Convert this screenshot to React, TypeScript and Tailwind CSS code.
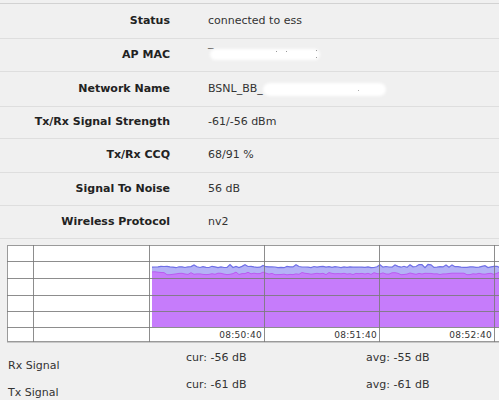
import React from "react";

const rows: { label: string; value: React.ReactNode; h: number }[] = [
  { label: "Status", value: "connected to ess", h: 34 },
  {
    label: "AP MAC",
    value: (
      <span className="relative inline-block w-[115px] h-[14px] align-middle">
        <span className="absolute left-[0px] top-[-3px] text-[#555]">‾</span>
        <span className="absolute left-[2px] top-[1px] w-[110px] h-[11px] rounded-full bg-white blur-[1.5px]" />
        <span className="absolute left-[68px] top-[3px] w-[1px] h-[1px] bg-[#999]" />
        <span className="absolute left-[78px] top-[3px] w-[1px] h-[1px] bg-[#999]" />
        <span className="absolute left-[108px] top-[2px] w-[1px] h-[1px] bg-[#999]" />
        <span className="absolute left-[108px] top-[9px] w-[1px] h-[1px] bg-[#999]" />
      </span>
    ),
    h: 32,
  },
  {
    label: "Network Name",
    value: (
      <span className="inline-flex items-center">
        <span>BSNL_BB_</span>
        <span className="relative inline-block w-[125px] h-[14px]">
          <span className="absolute left-[0px] top-[1px] w-[123px] h-[13px] rounded-full bg-white blur-[1.5px]" />
          <span className="absolute left-[95px] top-[8px] w-[1px] h-[1px] bg-[#aaa]" />
        </span>
      </span>
    ),
    h: 34,
  },
  { label: "Tx/Rx Signal Strength", value: "-61/-56 dBm", h: 31 },
  { label: "Tx/Rx CCQ", value: "68/91 %", h: 33 },
  { label: "Signal To Noise", value: "56 dB", h: 32 },
  { label: "Wireless Protocol", value: "nv2", h: 32 },
];

function rand(seed: number) {
  let s = seed;
  return () => {
    s = (s * 9301 + 49297) % 233280;
    return s / 233280;
  };
}

function Chart() {
  const W = 500;
  const startX = 145;
  const r = rand(7);
  const blue: [number, number][] = [];
  const purple: [number, number][] = [];
  for (let x = startX; x <= W; x += 3) {
    const bump = r() < 0.12 ? -2 : 0;
    blue.push([x, 22 + (r() - 0.5) * 1.4 + bump]);
    const pb = x < 160 ? 27.5 : 29;
    purple.push([x, pb + (r() - 0.5) * 1.6 + (r() < 0.1 ? -1.2 : 0)]);
  }
  const line = (pts: [number, number][]) =>
    pts.map((p, i) => `${i === 0 ? "M" : "L"}${p[0]},${p[1].toFixed(1)}`).join(" ");
  const blueArea = `${line(blue)} L${W},82 L${startX},82 Z`;
  const purpleArea = `${line(purple)} L${W},82 L${startX},82 Z`;
  const hLines = [16, 33, 50, 66, 82];
  const vLines = [26, 142, 257, 372, 487];
  return (
    <svg width={W} height={98} className="block">
      <rect x={0.5} y={0.5} width={W} height={96} fill="#ffffff" stroke="#9a9a9a" />
      <path d={blueArea} fill="#b4b2f6" />
      <path d={line(blue)} fill="none" stroke="#6f6fe6" strokeWidth={1.2} />
      <path d={purpleArea} fill="#c67cfb" />
      <path d={line(purple)} fill="none" stroke="#b85ef0" strokeWidth={1} />
      {hLines.map((y) => (
        <line key={y} x1={0} x2={W} y1={y + 0.5} y2={y + 0.5} stroke="#7a7a7a" strokeWidth={1} opacity={0.85} />
      ))}
      {vLines.map((x) => (
        <line key={x} x1={x + 0.5} x2={x + 0.5} y1={0} y2={97} stroke="#7a7a7a" strokeWidth={1} opacity={0.85} />
      ))}
      {[
        ["08:50:40", 255],
        ["08:51:40", 370],
        ["08:52:40", 485],
      ].map(([t, x]) => (
        <text
          key={t as string}
          x={x as number}
          y={93}
          textAnchor="end"
          fontSize={9}
          fill="#333"
          fontFamily="'DejaVu Sans', Verdana, sans-serif"
          letterSpacing={0.3}
        >
          {t}
        </text>
      ))}
      <line x1={0} x2={W} y1={97.5} y2={97.5} stroke="#c8c8c8" />
    </svg>
  );
}

export default function App() {
  return (
    <div
      className="w-[499px] h-[400px] overflow-hidden bg-[#f0f0f0] text-[11px] text-[#333]"
      style={{ fontFamily: "'DejaVu Sans', Verdana, sans-serif" }}
    >
      <div className="pt-[3px]">
        <div className="border-t border-[#d2d2d2]">
          {rows.map((row) => (
            <div
              key={row.label}
              className="flex items-center border-b border-[#dedede]"
              style={{ height: row.h + 1 }}
            >
              <div className="w-[170px] text-right font-bold text-[#222]">{row.label}</div>
              <div className="pl-[38px] flex items-center">{row.value}</div>
            </div>
          ))}
        </div>
        <div className="pl-[7px] pt-[6px]">
          <Chart />
        </div>
        <div className="relative pt-[7px]">
          <div className="flex h-[27px]">
            <div className="w-[186px] pl-[8px] pt-[8px]">Rx Signal</div>
            <div className="w-[180px]">cur: -56 dB</div>
            <div>avg: -55 dB</div>
          </div>
          <div className="flex h-[27px]">
            <div className="w-[186px] pl-[8px] pt-[8px]">Tx Signal</div>
            <div className="w-[180px]">cur: -61 dB</div>
            <div>avg: -61 dB</div>
          </div>
        </div>
      </div>
    </div>
  );
}
